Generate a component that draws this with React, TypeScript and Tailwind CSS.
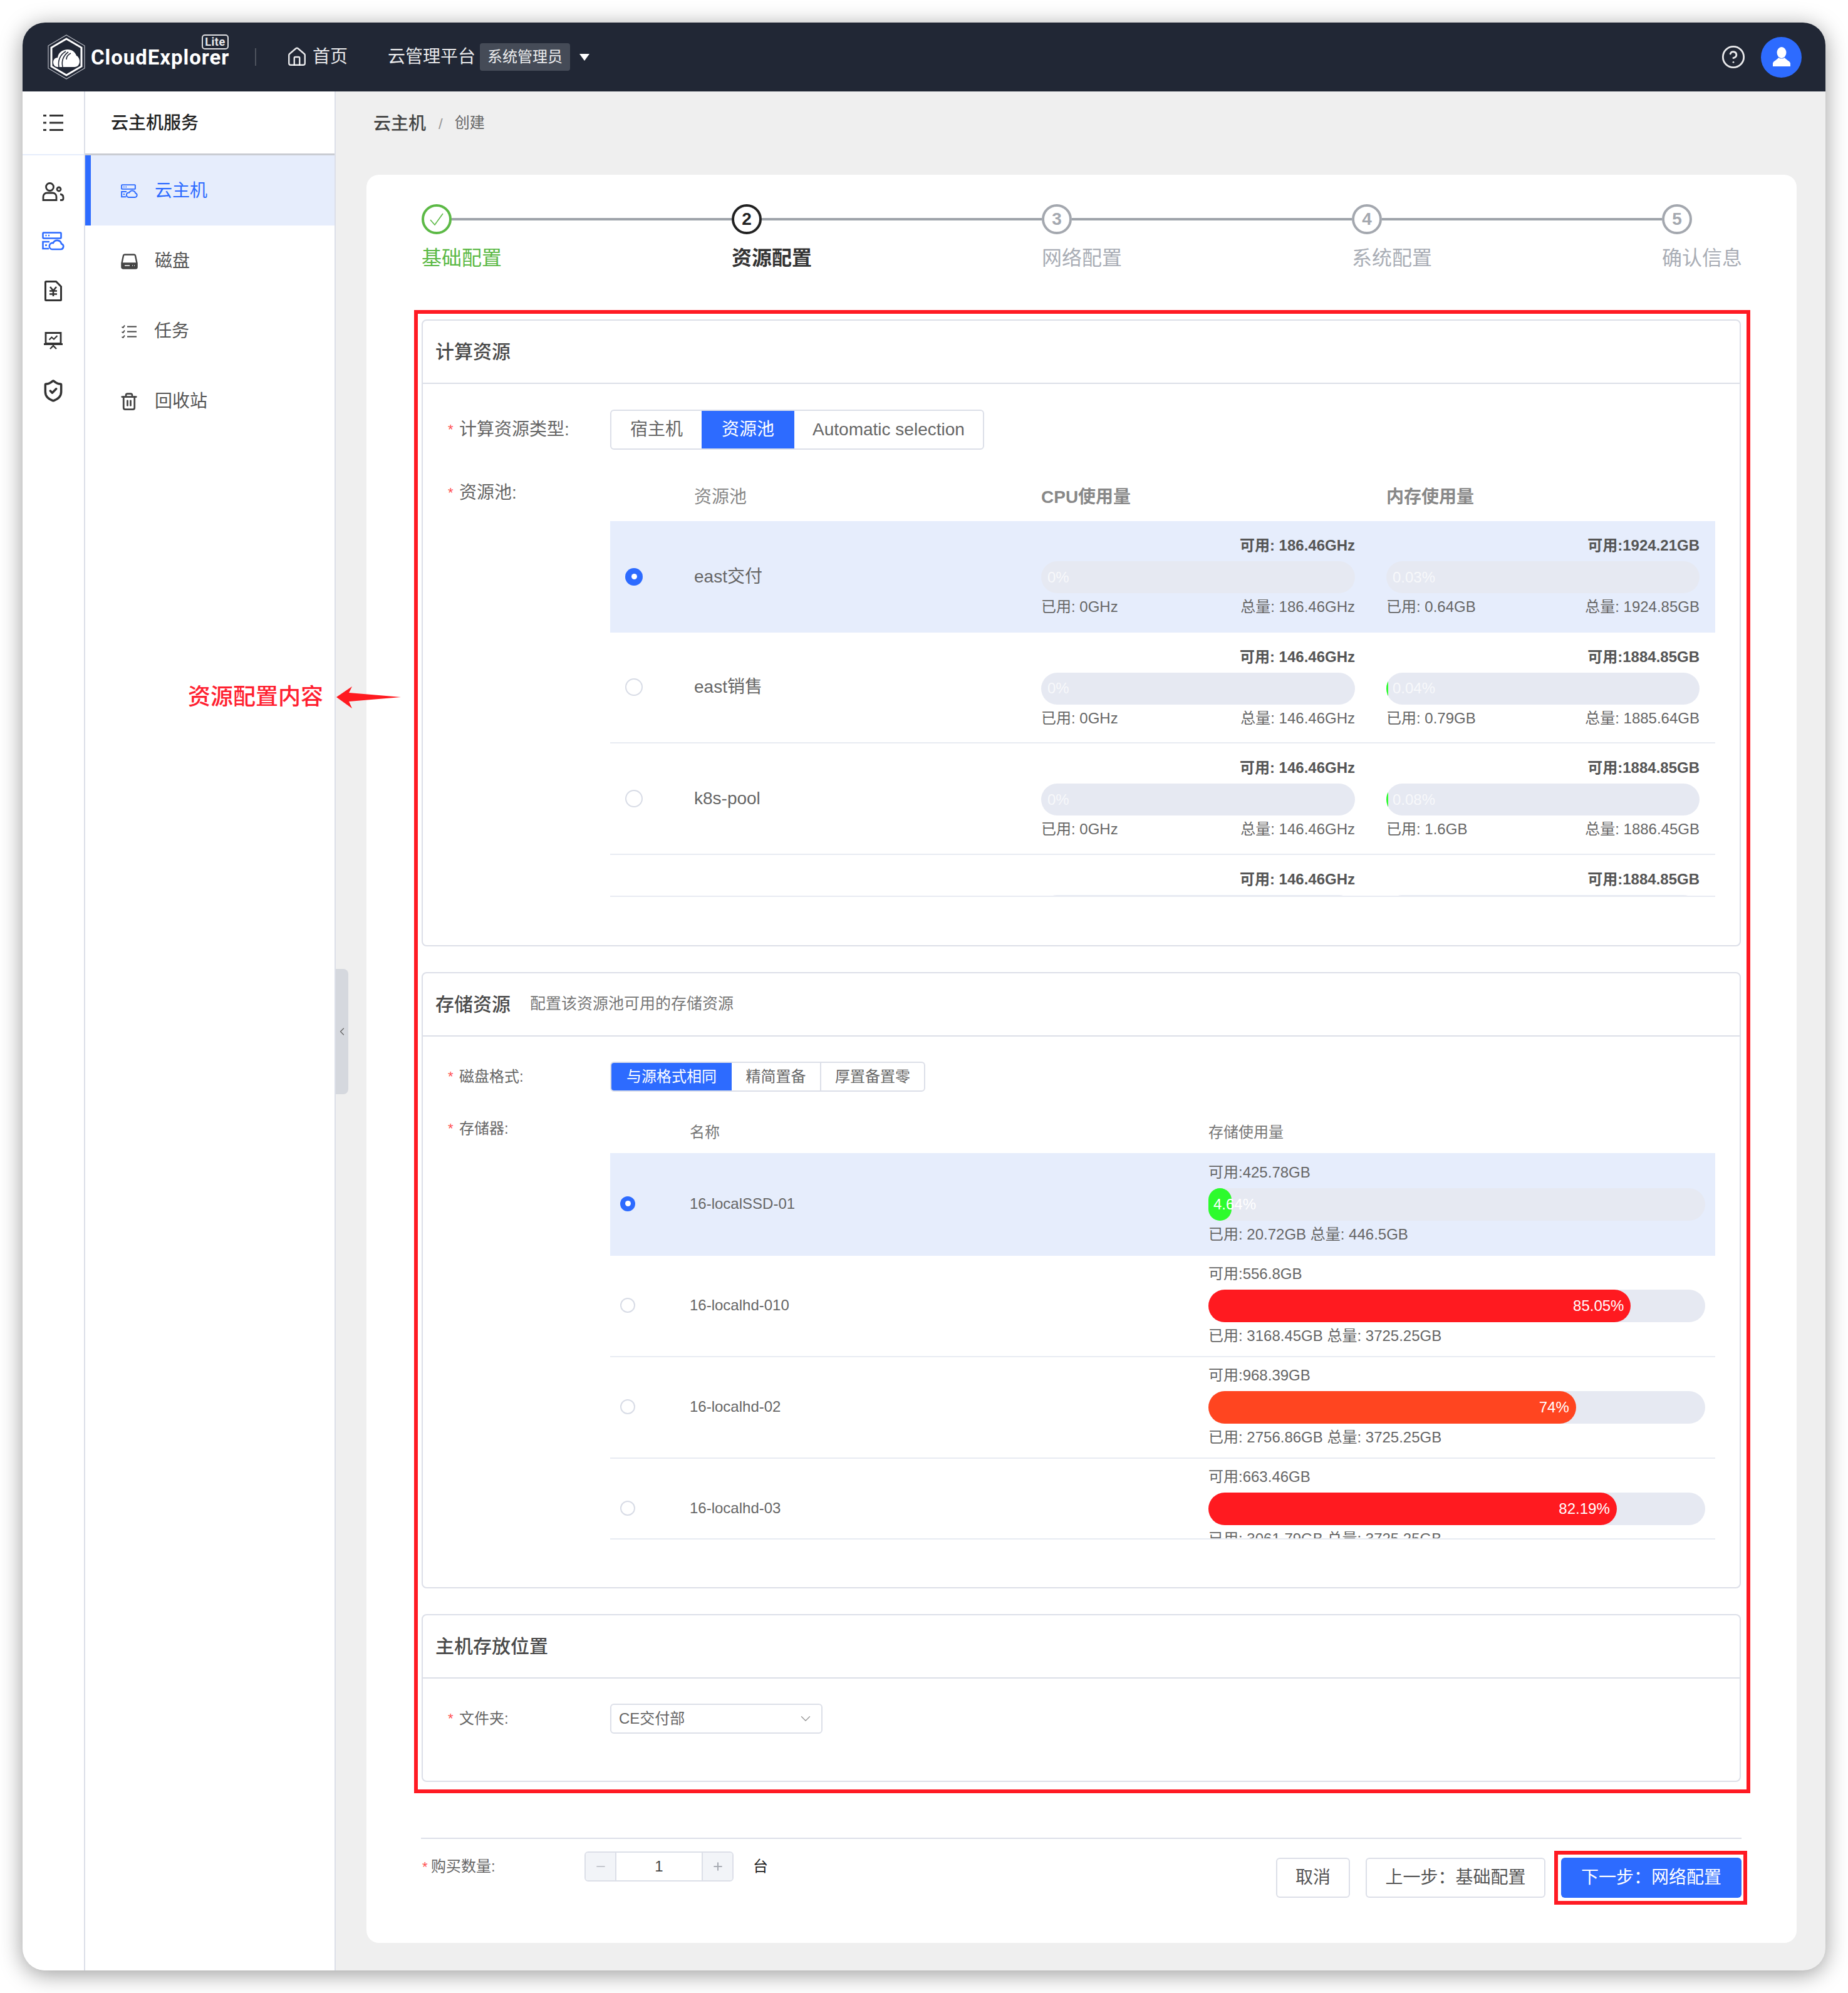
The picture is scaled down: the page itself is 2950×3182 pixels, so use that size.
import React from "react";
import { ChevronDown, ChevronLeft, CircleHelp, House, Minus, Plus, ShieldCheck, Trash2 } from "lucide-react";

const POOLS = [
  { name: "east交付", cpuFree: "186.46GHz", memFree: "1924.21GB", cpuPct: "0%", memPct: "0.03%", cpuUsed: "0GHz", cpuTotal: "186.46GHz", memUsed: "0.64GB", memTotal: "1924.85GB", sliver: false },
  { name: "east销售", cpuFree: "146.46GHz", memFree: "1884.85GB", cpuPct: "0%", memPct: "0.04%", cpuUsed: "0GHz", cpuTotal: "146.46GHz", memUsed: "0.79GB", memTotal: "1885.64GB", sliver: true },
  { name: "k8s-pool", cpuFree: "146.46GHz", memFree: "1884.85GB", cpuPct: "0%", memPct: "0.08%", cpuUsed: "0GHz", cpuTotal: "146.46GHz", memUsed: "1.6GB", memTotal: "1886.45GB", sliver: true },
  { name: "", cpuFree: "146.46GHz", memFree: "1884.85GB", cpuPct: "", memPct: "", cpuUsed: "", cpuTotal: "", memUsed: "", memTotal: "", sliver: false },
];

const DISKS = [
  { name: "16-localSSD-01", free: "425.78GB", pct: 4.64, color: "#2dfb2d", used: "20.72GB", total: "446.5GB" },
  { name: "16-localhd-010", free: "556.8GB", pct: 85.05, color: "#ff1a20", used: "3168.45GB", total: "3725.25GB" },
  { name: "16-localhd-02", free: "968.39GB", pct: 74, color: "#ff4520", used: "2756.86GB", total: "3725.25GB" },
  { name: "16-localhd-03", free: "663.46GB", pct: 82.19, color: "#ff1a20", used: "3061.79GB", total: "3725.25GB" },
];

const STEPS = ["基础配置", "资源配置", "网络配置", "系统配置", "确认信息"];

function Logo() {
  return (
    <svg width="62" height="72" viewBox="0 0 62 72" fill="none" className="shrink-0">
      <path d="M31 1 60 18v36L31 71 2 54V18z" stroke="#b9bcc4" strokeWidth="1.200" />
      <path d="M31 7 55 21v30L31 65 7 51V21z" stroke="#fff" strokeWidth="3" />
      <path d="M17 52c-4 0-7-3-7-7.500s3-7.500 7-7.500c1-8 8-13 16-13 7 0 12 4 14 10 3 1 5 5 5 9 0 5-3 9-8 9z" fill="#fff" />
      <path d="M19 52c-2-10 2-20 11-25M25 52c-2-9 1-18 9-24M31 40c0-4 3-8 7-10" stroke="#212735" strokeWidth="1.600" />
    </svg>
  );
}

function MenuIcon() {
  return (
    <svg width="32" height="28" viewBox="0 0 32 28" fill="none" stroke="#333" strokeWidth="3">
      <path d="M0 2.500h5M10 2.500h22M0 14h5M10 14h22M0 25.500h5M10 25.500h22" />
    </svg>
  );
}

function UsersIcon() {
  return (
    <svg width="36" height="30" viewBox="0 0 36 30" fill="none" stroke="#333" strokeWidth="2.800">
      <circle cx="12.500" cy="7.500" r="6" />
      <path d="M2 28.500V23a6 6 0 0 1 6-6h9a6 6 0 0 1 6 6v5.500z" />
      <circle cx="27" cy="11" r="3" />
      <path d="M29 19c3 .5 5 2.500 5 5v2c0 1.500-1 2.500-2.500 2.500H29" />
    </svg>
  );
}

function CloudServerIcon({ size = 36 }: { size?: number }) {
  return (
    <svg width={size} height={(size * 30) / 36} viewBox="0 0 36 30" fill="none" stroke="#2d6bff" strokeWidth="2.600">
      <rect x="1.500" y="1.500" width="29" height="9" rx="1" />
      <path d="M5.500 6h2M10 6h2" />
      <path d="M12 16H1.500v11H11" />
      <path d="M5 21.500h3" />
      <path d="M16 28h14a4.500 4.500 0 0 0 1-8.800A7 7 0 0 0 17.800 18 5 5 0 0 0 16 28z" />
    </svg>
  );
}

function DiskIcon() {
  return (
    <svg width="27" height="25" viewBox="0 0 27 25" fill="none" stroke="#444" strokeWidth="2.400">
      <path d="M6 1.500h15a2 2 0 0 1 2 1.600l2.500 12v6.400a2 2 0 0 1-2 2h-20a2 2 0 0 1-2-2v-6.400l2.500-12a2 2 0 0 1 2-1.600z" />
      <path d="M2 15.500h23v6.500H2z" fill="#444" />
      <path d="M6 19h8M18 19h1M21 19h1" stroke="#fff" strokeWidth="1.500" />
    </svg>
  );
}

function TaskIcon() {
  return (
    <svg width="24" height="21" viewBox="0 0 24 21" fill="none" stroke="#444" strokeWidth="2">
      <path d="M9 2.500h15M9 10.500h15M9 18.500h15" />
      <path d="M.5 3l2 1 2.500-3.500M.5 11l2 1 2.500-3.500M.5 19l2 1 2.500-3.500" strokeWidth="1.800" />
    </svg>
  );
}

function BillIcon() {
  return (
    <svg width="28" height="33" viewBox="0 0 28 33" fill="none" stroke="#333" strokeWidth="3">
      <path d="M1.500 2.500a1 1 0 0 1 1-1h16l8 8v21a1 1 0 0 1-1 1h-23a1 1 0 0 1-1-1z" />
      <path d="M9 10l5 6 5-6M8 16.500h12M8 21.500h12M14 16v9" strokeWidth="2.600" />
    </svg>
  );
}

function BoardIcon() {
  return (
    <svg width="30" height="28" viewBox="0 0 30 28" fill="none" stroke="#333" strokeWidth="2.800">
      <path d="M3 1.500h24v17H3zM0 19.500h30" />
      <path d="M8.500 12.500l4-4 3.500 3 5.500-5.500" strokeWidth="2.200" />
      <path d="M15 20v3M15 22l-5 5M15 22l5 5" strokeWidth="2.400" />
    </svg>
  );
}

function Radio({ checked, size }: { checked: boolean; size: number }) {
  return (
    <span
      className={`flex items-center justify-center rounded-full ${checked ? "bg-[#2d6bff]" : "border-2 border-[#d8dce6] bg-white"}`}
      style={{ width: size, height: size }}
    >
      {checked && <span className="w-[9px] h-[9px] rounded-full bg-white" />}
    </span>
  );
}

function Section({ title, hint, height, children }: { title: string; hint?: string; height: number; children: React.ReactNode }) {
  return (
    <section className="rounded-[8px] border-2 border-[#dcdfe8] bg-white" style={{ height }}>
      <div className="h-[101px] flex items-center gap-[31px] pl-[20px] border-b-2 border-[#dcdfe8]">
        <span className="text-[30px] leading-[40px] font-medium text-[#4a4a4a]">{title}</span>
        {hint && <span className="-mt-[3px] text-[25px] leading-[40px] text-[#777]">{hint}</span>}
      </div>
      {children}
    </section>
  );
}

function Label({ text, big }: { text: string; big?: boolean }) {
  return (
    <div className={`w-[259px] shrink-0 flex items-center gap-[10px] text-[#666] ${big ? "text-[28px]" : "text-[24px]"} leading-[40px]`}>
      <span className="text-[#ff4d4f] text-[22px] w-[8px]">*</span>
      <span>{text}</span>
    </div>
  );
}

function Segments({ items, active, small }: { items: { text: string; w: number }[]; active: number; small?: boolean }) {
  return (
    <div className={`flex rounded-[6px] border-2 border-[#dcdfe8] overflow-hidden bg-white ${small ? "h-[48px] text-[24px]" : "h-[64px] text-[28px]"}`}>
      {items.map((it, i) => (
        <div
          key={it.text}
          style={{ width: it.w }}
          className={`flex items-center justify-center ${i === active ? "bg-[#2d6bff] text-white" : "text-[#666]"} ${small && i > active + 1 ? "border-l-2 border-[#dcdfe8]" : ""}`}
        >
          {it.text}
        </div>
      ))}
    </div>
  );
}

function PoolBar({ pct, sliver }: { pct: string; sliver: boolean }) {
  return (
    <div className="relative h-[51px] rounded-full bg-[#e6e9f2] overflow-hidden flex items-center pl-[10px]">
      {sliver && <span className="absolute left-0 top-[14px] bottom-[14px] w-[3px] bg-[#2dfb2d]" />}
      <span className="text-[24px] text-white/70">{pct}</span>
    </div>
  );
}

function PoolCell({ free, pct, used, total, sliver, colon }: { free: string; pct: string; used: string; total: string; sliver: boolean; colon: string }) {
  return (
    <div className="text-[24px] leading-[34px] text-[#666]">
      <div className="text-right font-bold text-[#555]">可用:{colon}{free}</div>
      <div className="mt-[8px]">
        <PoolBar pct={pct} sliver={sliver} />
      </div>
      <div className="mt-[5px] flex justify-between">
        <span>已用: {used}</span>
        <span>总量: {total}</span>
      </div>
    </div>
  );
}

function PoolRow({ row, selected }: { row: (typeof POOLS)[number]; selected: boolean }) {
  return (
    <div className={`h-[177.5px] grid grid-cols-[134px_554px_551px_525px] ${selected ? "bg-[#e6edfc]" : "border-b-2 border-[#e8ebf2]"}`}>
      <div className="flex items-center pl-[24px]">
        <Radio checked={selected} size={28} />
      </div>
      <div className="flex items-center text-[28px] text-[#666]">{row.name}</div>
      <div className="pt-[22px] pr-[50px]">
        <PoolCell free={row.cpuFree} pct={row.cpuPct} used={row.cpuUsed} total={row.cpuTotal} sliver={false} colon=" " />
      </div>
      <div className="pt-[22px] pr-[25px]">
        <PoolCell free={row.memFree} pct={row.memPct} used={row.memUsed} total={row.memTotal} sliver={row.sliver} colon="" />
      </div>
    </div>
  );
}

function DiskRow({ row, selected }: { row: (typeof DISKS)[number]; selected: boolean }) {
  const small = row.pct < 10;
  return (
    <div className={`grid grid-cols-[127px_828px_809px] ${selected ? "h-[164px] bg-[#e6edfc]" : "h-[162px] border-b-2 border-[#e8ebf2]"}`}>
      <div className="flex items-center pl-[16px] pb-[3px]">
        <Radio checked={selected} size={24} />
      </div>
      <div className="flex items-center pb-[3px] text-[24px] text-[#666]">{row.name}</div>
      <div className={`${selected ? "pt-[15px]" : "pt-[13px]"} pr-[16px] text-[24px] leading-[32px] text-[#666]`}>
        <div>可用:{row.free}</div>
        <div className="relative mt-[9px] h-[52px] rounded-full bg-[#e6e9f2]">
          <div
            className="h-full rounded-full flex items-center justify-end pr-[11px] text-white"
            style={{ width: `${row.pct}%`, backgroundColor: row.color }}
          >
            {!small && `${row.pct}%`}
          </div>
          {small && <span className="absolute left-[8px] top-[10px] text-white">{row.pct}%</span>}
        </div>
        <div className="mt-[6px]">
          已用: {row.used} 总量: {row.total}
        </div>
      </div>
    </div>
  );
}

function Stepper() {
  return (
    <div className="pl-[12px] pt-[47px] h-[216px] flex">
      {STEPS.map((label, i) => {
        const done = i === 0;
        const active = i === 1;
        return (
          <div key={label} className={i < 4 ? "w-[495px]" : "w-[130px]"}>
            <div className="flex items-center h-[48px]">
              <span
                className={`w-[48px] h-[48px] shrink-0 rounded-full border-[4px] flex items-center justify-center text-[28px] font-bold ${
                  done ? "border-[#5cb946]" : active ? "border-[#222] text-[#222]" : "border-[#a4a8af] text-[#a4a8af]"
                }`}
              >
                {done ? (
                  <svg width="24" height="24" viewBox="0 0 24 24" fill="none" stroke="#5cb946" strokeWidth="1.600">
                    <path d="M2 13l7 8L22 3" />
                  </svg>
                ) : (
                  i + 1
                )}
              </span>
              {i < 4 && <span className="flex-1 h-[4px] bg-[#9ea3aa]" />}
            </div>
            <div
              className={`mt-[16px] text-[32px] leading-[44px] whitespace-nowrap ${
                done ? "text-[#5cb946]" : active ? "text-[#333] font-bold" : "text-[#a9adb5]"
              }`}
            >
              {label}
            </div>
          </div>
        );
      })}
    </div>
  );
}

export default function App() {
  return (
    <div className="relative w-[2950px] h-[3182px] bg-white p-[36px] font-['Liberation_Sans','Noto_Sans_CJK_SC',sans-serif]">
      <div className="w-[2878px] h-[3110px] rounded-[36px] overflow-hidden flex flex-col bg-[#efefef] shadow-[0_6px_36px_rgba(0,0,0,0.4)]">
        {/* top bar */}
        <header className="h-[110px] shrink-0 bg-[#212735] flex items-center text-white/90 pl-[39px] pr-[38px]">
          <Logo />
          <div className="relative ml-[8px] w-[222px]">
            <span className="font-['Roboto'] font-bold text-[33px] tracking-[0.95px] text-white leading-[40px] block mt-[1px] whitespace-nowrap">CloudExplorer</span>
            <span className="absolute right-[2px] -top-[16px] h-[24px] w-[43px] rounded-[5px] border-2 border-white/85 font-['Roboto'] text-[18px] leading-[20px] font-bold text-center tracking-[0.5px]">Lite</span>
          </div>
          <span className="ml-[40px] w-[2px] h-[28px] bg-white/20" />
          <House size={34} strokeWidth={1.700} className="ml-[48px]" />
          <span className="ml-[8px] text-[28px]">首页</span>
          <span className="ml-[64px] text-[28px]">云管理平台</span>
          <span className="ml-[7px] h-[44px] w-[144px] rounded-[4px] bg-[#454b57] flex items-center justify-center text-[24px]">系统管理员</span>
          <span className="ml-[15px] w-0 h-0 border-x-[8px] border-x-transparent border-t-[11px] border-t-white" />
          <CircleHelp size={40} strokeWidth={1.700} className="ml-auto" />
          <span className="ml-[24px] w-[65px] h-[65px] rounded-full bg-[#2d6bff] flex items-center justify-center">
            <svg width="30" height="32" viewBox="0 0 30 32" fill="#fff">
              <ellipse cx="15" cy="9" rx="7.500" ry="9" />
              <path d="M10 17c-1 3-8 5-9 9v5h28v-5c-1-4-8-6-9-9-3 2-7 2-10 0z" />
            </svg>
          </span>
        </header>

        <div className="flex-1 flex min-h-0">
          {/* icon rail */}
          <nav className="w-[100px] shrink-0 bg-white border-r-2 border-[#dcdfe8] flex flex-col items-center">
            <div className="w-full h-[102px] flex items-center justify-center border-b-2 border-[#e6edfc]">
              <MenuIcon />
            </div>
            <div className="mt-[18px] grid auto-rows-[79.5px] place-items-center">
              <UsersIcon />
              <CloudServerIcon />
              <BillIcon />
              <BoardIcon />
              <ShieldCheck size={38} strokeWidth={2.200} color="#333" />
            </div>
          </nav>

          {/* service menu */}
          <aside className="relative w-[400px] shrink-0 bg-white border-r-2 border-[#dcdfe8]">
            <div className="h-[102px] flex items-center pl-[41px] pt-[2px] text-[28px] font-medium text-[#222] border-b-[3px] border-[#c9ccd2]">云主机服务</div>
            <ul className="text-[28px] text-[#555]">
              <li className="h-[112px] flex items-center gap-[27px] pl-[48px] pt-[2px] bg-[#e6edfc] border-l-[9px] border-[#2d6bff] text-[#2d6bff]">
                <CloudServerIcon size={27} />
                云主机
              </li>
              <li className="h-[112px] flex items-center gap-[27px] pl-[57px] pt-[2px]">
                <DiskIcon />
                磁盘
              </li>
              <li className="h-[112px] flex items-center gap-[28px] pl-[58px] pt-[2px]">
                <TaskIcon />
                任务
              </li>
              <li className="h-[112px] flex items-center gap-[26px] pl-[55px] pt-[2px]">
                <Trash2 size={30} strokeWidth={2.200} color="#444" />
                回收站
              </li>
            </ul>
            <button className="absolute -right-[22px] top-[1401px] w-[20px] h-[200px] rounded-r-[8px] bg-[#d5d8de] flex items-center justify-center">
              <ChevronLeft size={22} strokeWidth={1.500} color="#666" />
            </button>
          </aside>

          {/* main */}
          <main className="flex-1 min-w-0 pl-[49px] pr-[46px]">
            <div className="h-[133px] flex items-start pt-[32px] pl-[11px] text-[#666]">
              <span className="text-[28px] leading-[40px] font-medium text-[#444]">云主机</span>
              <span className="ml-[20px] text-[24px] leading-[40px] text-[#999]">/</span>
              <span className="ml-[19px] text-[24px] leading-[36px]">创建</span>
            </div>

            <div className="h-[2823px] rounded-[20px] bg-white pl-[76px] pr-[74px]">
              <Stepper />

              <div className="border-[6px] border-[#ff1a23] pt-[9px] pl-[6px] pr-[9px] pb-[10px] h-[2368px] flex flex-col gap-[41px]">
                <Section title="计算资源" height={1001}>
                  <div className="pl-[40px] pt-[41px] flex items-center">
                    <Label text="计算资源类型:" big />
                    <Segments
                      active={1}
                      items={[
                        { text: "宿主机", w: 144 },
                        { text: "资源池", w: 148 },
                        { text: "Automatic selection", w: 301 },
                      ]}
                    />
                  </div>
                  <div className="pl-[40px] mt-[34px] flex items-start">
                    <div className="pt-[15px]">
                      <Label text="资源池:" big />
                    </div>
                    <div className="w-[1764px] h-[680px] overflow-hidden border-b-2 border-[#e8ebf2]">
                      <div className="h-[80px] pt-[3px] grid grid-cols-[134px_554px_551px_525px] items-center text-[28px] text-[#888]">
                        <span />
                        <span>资源池</span>
                        <span className="font-bold">CPU使用量</span>
                        <span className="font-bold">内存使用量</span>
                      </div>
                      {POOLS.map((row, i) => (
                        <PoolRow key={i} row={row} selected={i === 0} />
                      ))}
                    </div>
                  </div>
                </Section>

                <Section title="存储资源" hint="配置该资源池可用的存储资源" height={984}>
                  <div className="pl-[40px] pt-[40px] flex items-center">
                    <Label text="磁盘格式:" />
                    <Segments
                      small
                      active={0}
                      items={[
                        { text: "与源格式相同", w: 192 },
                        { text: "精简置备", w: 141 },
                        { text: "厚置备置零", w: 166 },
                      ]}
                    />
                  </div>
                  <div className="pl-[40px] mt-[32px] flex items-start">
                    <div className="pt-[7px]">
                      <Label text="存储器:" />
                    </div>
                    <div className="w-[1764px] h-[683px] overflow-hidden border-b-2 border-[#e8ebf2]">
                      <div className="h-[66px] grid grid-cols-[127px_828px_809px] items-center text-[24px] text-[#777]">
                        <span />
                        <span>名称</span>
                        <span>存储使用量</span>
                      </div>
                      {DISKS.map((row, i) => (
                        <DiskRow key={row.name} row={row} selected={i === 0} />
                      ))}
                    </div>
                  </div>
                </Section>

                <Section title="主机存放位置" height={268}>
                  <div className="pl-[40px] pt-[40px] flex items-center">
                    <Label text="文件夹:" />
                    <div className="w-[339px] h-[48px] rounded-[6px] border-2 border-[#dcdfe8] flex items-center justify-between pl-[12px] pr-[12px] text-[24px] text-[#666]">
                      CE交付部
                      <ChevronDown size={26} strokeWidth={1.300} color="#999" />
                    </div>
                  </div>
                </Section>
              </div>

              <div className="mt-[71px] ml-[11px] mr-[14px] border-t-2 border-[#dcdfe8] flex justify-between">
                <div className="mt-[20px] flex items-center h-[48px] text-[24px] text-[#666]">
                  <span className="text-[#ff4d4f] text-[22px] w-[16px] pl-[2px]">*</span>
                  <span className="w-[245px]">购买数量:</span>
                  <div className="w-[238px] h-[48px] rounded-[6px] border-2 border-[#dcdfe8] flex overflow-hidden">
                    <span className="w-[49px] bg-[#f2f4f8] border-r-2 border-[#dcdfe8] flex items-center justify-center">
                      <Minus size={20} strokeWidth={2.500} color="#c4c7ce" />
                    </span>
                    <span className="flex-1 flex items-center justify-center text-[#444]">1</span>
                    <span className="w-[49px] bg-[#f2f4f8] border-l-2 border-[#dcdfe8] flex items-center justify-center">
                      <Plus size={20} strokeWidth={2.500} color="#a8acb4" />
                    </span>
                  </div>
                  <span className="ml-[31px] text-[#222]">台</span>
                </div>
                <div className="mt-[30px] flex gap-[25px] text-[28px]">
                  <button className="w-[118px] h-[64px] rounded-[6px] border-2 border-[#dcdfe8] text-[#555]">取消</button>
                  <button className="w-[287px] h-[64px] rounded-[6px] border-2 border-[#dcdfe8] text-[#555]">上一步：基础配置</button>
                  <button className="relative w-[288px] h-[64px] rounded-[6px] bg-[#2d6bff] text-white">
                    下一步：网络配置
                    <span className="absolute -left-[11px] -right-[9px] -top-[11px] -bottom-[11px] border-[6px] border-[#ff1a23]" />
                  </button>
                </div>
              </div>
            </div>
          </main>
        </div>
      </div>

      {/* annotation */}
      <span className="absolute left-[300px] top-[1086px] text-[36px] leading-[54px] font-medium text-[#ff2030]">资源配置内容</span>
      <svg className="absolute left-[537px] top-[1096px]" width="104" height="36" viewBox="0 0 104 36" fill="#ff1a20">
        <path d="M0 17 25 0 20 10 103 17 20 24 25 35z" />
      </svg>
    </div>
  );
}
